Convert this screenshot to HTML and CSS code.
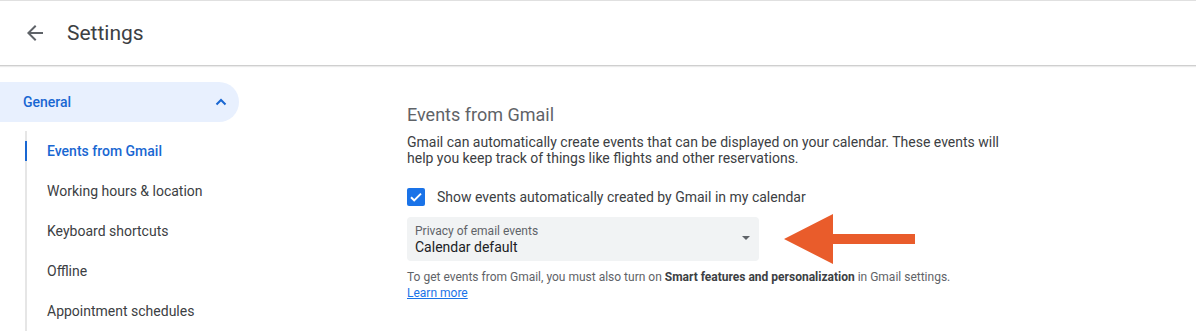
FILE: index.html
```html
<!DOCTYPE html>
<html lang="en">
<head>
<meta charset="utf-8">
<title>Settings</title>
<link rel="stylesheet" href="styles.css">
</head>
<body>
<header class="topbar">
  <button class="back" aria-label="Back">
    <svg viewBox="0 0 24 24" width="24" height="24"><path d="M20 11H7.83l5.59-5.59L12 4l-8 8 8 8 1.41-1.41L7.83 13H20v-2z" fill="#5f6368"/></svg>
  </button>
  <h1 class="title">Settings</h1>
</header>
<div class="main">
  <nav class="sidebar">
    <div class="group">
      <span>General</span>
      <svg class="chev" viewBox="0 0 12 8" width="12" height="8"><path d="M1.5 6.5 6 2l4.5 4.5" fill="none" stroke="#1967d2" stroke-width="2"/></svg>
    </div>
    <ul class="items">
      <li class="item active">Events from Gmail</li>
      <li class="item">Working hours &amp; location</li>
      <li class="item">Keyboard shortcuts</li>
      <li class="item">Offline</li>
      <li class="item">Appointment schedules</li>
    </ul>
  </nav>
  <section class="content">
    <h2 class="heading">Events from Gmail</h2>
    <p class="desc">Gmail can automatically create events that can be displayed on your calendar. These events will help you keep track of things like flights and other reservations.</p>
    <label class="check">
      <span class="box"><svg viewBox="0 0 18 18" width="18" height="18"><path d="M4 9.2l3.2 3.2L14 5.6" fill="none" stroke="#fff" stroke-width="2"/></svg></span>
      <span>Show events automatically created by Gmail in my calendar</span>
    </label>
    <div class="select-row">
      <div class="select">
        <div class="select-text">
          <span class="select-label">Privacy of email events</span>
          <span class="select-value">Calendar default</span>
        </div>
        <span class="caret"></span>
      </div>
      <svg class="arrow" viewBox="0 0 132 50" width="132" height="50"><polygon points="0,25 49,0 49,20 131,20 131,30 49,30 49,50" fill="#e95c2b"/></svg>
    </div>
    <p class="help">To get events from Gmail, you must also turn on <b>Smart features and personalization</b> in Gmail settings.<br><a href="#">Learn more</a></p>
  </section>
</div>
</body>
</html>
```
FILE: styles.css
```css
* { box-sizing: border-box; }
html, body { margin: 0; padding: 0; }
body {
  font-family: Roboto, "Liberation Sans", Arial, sans-serif;
  color: #3c4043;
  background: #fff;
  width: 1196px;
  height: 332px;
  overflow: hidden;
  border-top: 1px solid #e0e0e0;
}
.topbar {
  height: 65px;
  display: flex;
  align-items: center;
  padding-left: 23px;
  border-bottom: 1px solid #cfcfcf;
  box-shadow: 0 1px 1px rgba(0,0,0,0.08);
}
.back {
  border: 0;
  background: none;
  padding: 0;
  width: 24px;
  height: 24px;
  display: flex;
  margin-right: 20px;
}
.title {
  margin: 0;
  font-size: 21px;
  font-weight: 400;
  color: #3c4043;
  padding-bottom: 1px;
}
.main {
  display: flex;
}
.sidebar {
  width: 256px;
  flex: none;
  padding-top: 16px;
}
.group {
  width: 239px;
  height: 40px;
  background: #e8f0fe;
  border-radius: 0 20px 20px 0;
  display: flex;
  align-items: center;
  justify-content: space-between;
  padding: 0 12px 0 23px;
  color: #1967d2;
  font-size: 14px;
  font-weight: 500;
}
.chev { display: block; }
.items {
  list-style: none;
  margin: 9px 0 0 25px;
  padding: 0;
  border-left: 2px solid #e6e6e6;
}
.item {
  height: 40px;
  line-height: 40px;
  padding-left: 20px;
  font-size: 14px;
  color: #3c4043;
  position: relative;
}
.item.active {
  color: #1967d2;
  font-weight: 500;
}
.item.active::before {
  content: "";
  position: absolute;
  left: -2px;
  top: 10px;
  width: 2px;
  height: 20px;
  background: #1967d2;
}
.content {
  padding: 37px 0 0 151px;
}
.heading {
  margin: 0;
  font-size: 18px;
  font-weight: 400;
  line-height: 24px;
  color: #5f6368;
}
.desc {
  margin: 7px 0 0;
  width: 600px;
  font-size: 14px;
  line-height: 16px;
  color: #3c4043;
}
.check {
  display: flex;
  align-items: center;
  margin-top: 22px;
  font-size: 14px;
  color: #3c4043;
  height: 18px;
}
.box {
  width: 18px;
  height: 18px;
  border-radius: 2px;
  background: #1a73e8;
  display: flex;
  margin-right: 12px;
}
.select-row {
  display: flex;
  align-items: center;
  margin-top: 8px;
}
.select {
  width: 352px;
  height: 44px;
  background: #f1f3f4;
  border-radius: 4px;
  display: flex;
  align-items: center;
  justify-content: space-between;
  padding: 0 9px 0 8px;
}
.select-text {
  display: flex;
  flex-direction: column;
  padding-top: 1px;
}
.select-label {
  font-size: 12px;
  line-height: 14px;
  color: #5f6368;
}
.select-value {
  font-size: 14px;
  line-height: 18px;
  color: #202124;
}
.caret {
  width: 0;
  height: 0;
  border-left: 4px solid transparent;
  border-right: 4px solid transparent;
  border-top: 4px solid #5f6368;
  margin-bottom: 2px;
}
.arrow {
  margin-left: 25px;
  display: block;
}
.help {
  margin: 5px 0 0;
  font-size: 12px;
  line-height: 16px;
  color: #5f6368;
}
.help b { font-weight: 700; color: #3c4043; }
.help a { color: #1a73e8; text-decoration: underline; }
```
